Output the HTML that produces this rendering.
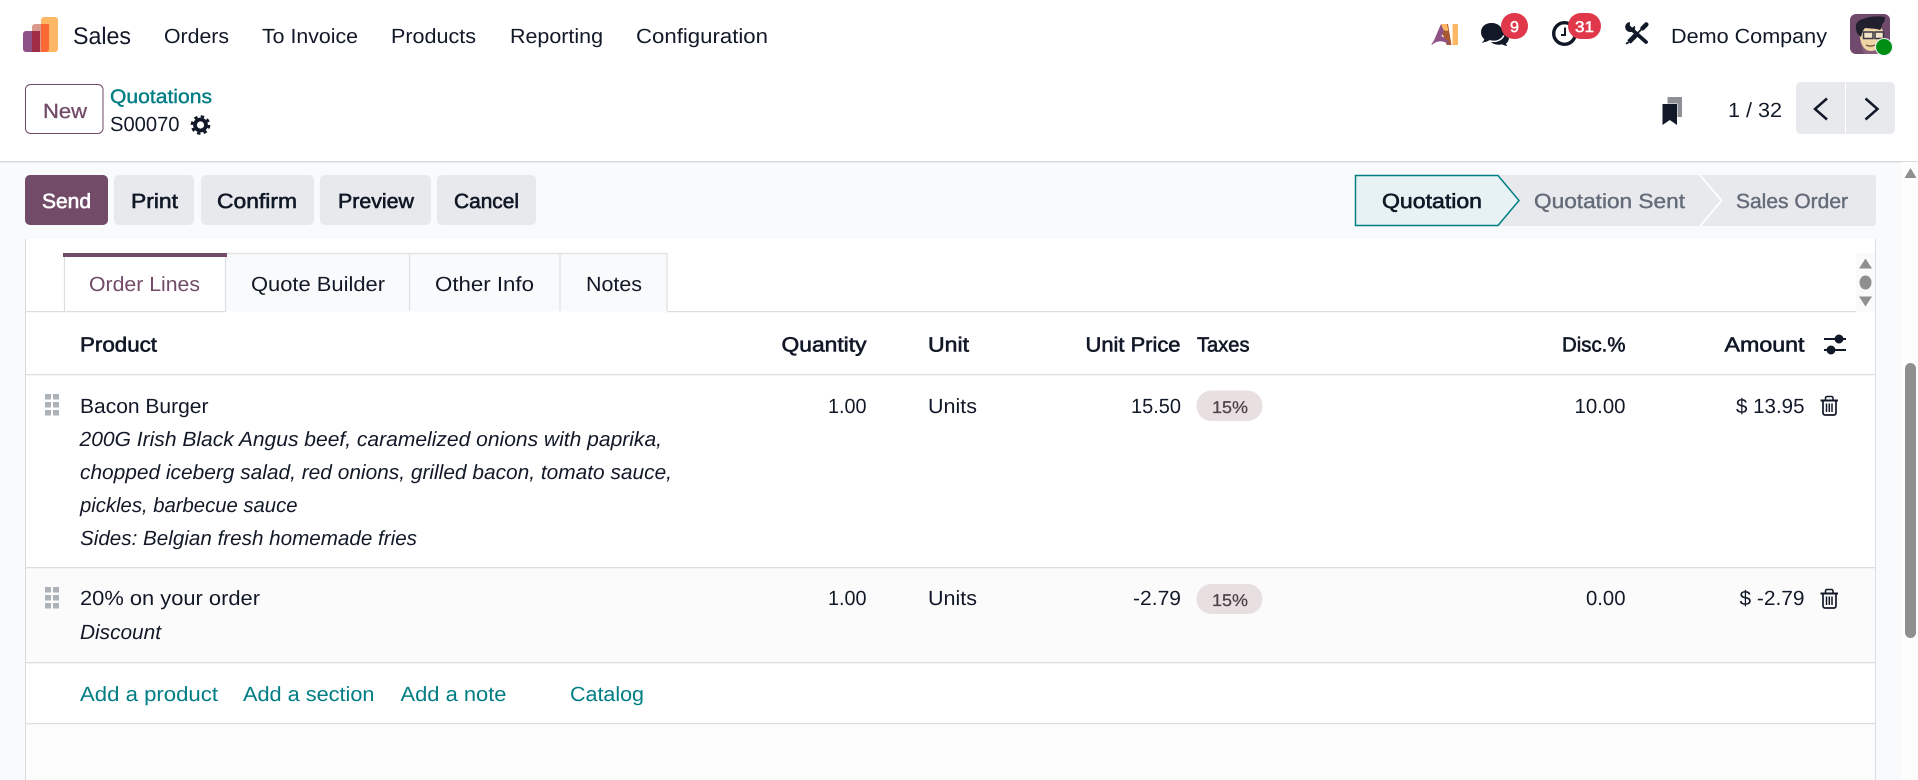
<!DOCTYPE html>
<html lang="en">
<head>
<meta charset="utf-8">
<title>Sales - S00070</title>
<style>
html,body{margin:0;padding:0;width:1918px;height:780px;overflow:hidden;background:#fff}
svg{display:block;position:absolute;left:0;top:0}
text{font-family:"Liberation Sans",sans-serif;font-size:20.5px;fill:#111827;text-rendering:geometricPrecision}
.s{stroke:#111827;stroke-width:.6}
.i{font-style:italic}
.l{fill:#017e84}
.g{fill:#646b78;stroke:#646b78;stroke-width:.4}
.m{fill:#714b67;stroke:#714b67;stroke-width:.3}
.w{fill:#fff;stroke:#fff;stroke-width:.6}
.bd{fill:#fff;font-size:15.5px;stroke:#fff;stroke-width:.5}
.t{fill:#4b4346;font-size:17px;stroke:#4b4346;stroke-width:.25}
</style>
</head>
<body>
<svg width="1918" height="780" viewBox="0 0 1918 780" xmlns="http://www.w3.org/2000/svg">
<defs>
<clipPath id="av"><rect x="1850" y="14" width="40" height="40" rx="6"/></clipPath>
<g id="trash" fill="none" stroke="#111827">
<path d="M1823 401.500V413a2 2 0 0 0 2 2h9a2 2 0 0 0 2-2V401.500" stroke-width="1.700"/>
<path d="M1820.500 400.500h17.500" stroke-width="2"/>
<path d="M1825.500 400V398a1.500 1.500 0 0 1 1.500-1.500h4.500a1.500 1.500 0 0 1 1.500 1.500v2" stroke-width="1.500"/>
<path d="M1826.500 403.500v8.500M1829.300 403.500v8.500M1832 403.500v8.500" stroke-width="1.500"/>
</g>
<g id="drag" fill="#adb1b8">
<rect x="45" y="394" width="6" height="5.500"/><rect x="53" y="394" width="6" height="5.500"/>
<rect x="45" y="402" width="6" height="5.500"/><rect x="53" y="402" width="6" height="5.500"/>
<rect x="45" y="410" width="6" height="5.500"/><rect x="53" y="410" width="6" height="5.500"/>
</g>
</defs>

<!-- backgrounds -->
<rect x="0" y="0" width="1918" height="780" fill="#f9fafb"/>
<rect x="0" y="0" width="1918" height="161" fill="#fff"/>
<rect x="0" y="161" width="1918" height="1.500" fill="#d8dadd"/>
<rect x="1901" y="162" width="17" height="618" fill="#fdfdfd"/>
<rect x="1905" y="363" width="11" height="275" rx="5.500" fill="#8f8f8f"/>
<path d="M1910.500 168l6 10h-12z" fill="#8f8f8f"/>

<!-- sheet -->
<rect x="25" y="239" width="1850.500" height="541" fill="#fff"/>
<rect x="25" y="239" width="1" height="541" fill="#d8dadd"/>
<rect x="1875" y="239" width="1" height="541" fill="#dcdfe2"/>
<rect x="26" y="568" width="1849" height="94" fill="#fbfbfb"/>
<rect x="26" y="724" width="1849" height="56" fill="#fcfcfc"/>

<!-- navbar -->
<g>
<path d="M41 20a3 3 0 0 1 3-3h11a3 3 0 0 1 3 3v29a3 3 0 0 1-3 3H41z" fill="#fdb765"/>
<path d="M32 27a3 3 0 0 1 3-3h6v28H32z" fill="#d9988c"/>
<path d="M41 24h8v25a3 3 0 0 1-3 3h-5z" fill="#fb6a36"/>
<path d="M23 34a3 3 0 0 1 3-3h6v21h-6a3 3 0 0 1-3-3z" fill="#8f5286"/>
<rect x="32" y="31" width="8" height="21" fill="#9e2d45"/>
</g>
<text x="73" y="44" style="font-size:24px" textLength="58" lengthAdjust="spacingAndGlyphs">Sales</text>
<text x="164" y="43" textLength="65" lengthAdjust="spacingAndGlyphs">Orders</text>
<text x="262" y="43" textLength="96" lengthAdjust="spacingAndGlyphs">To Invoice</text>
<text x="391" y="43" textLength="85" lengthAdjust="spacingAndGlyphs">Products</text>
<text x="510" y="43" textLength="93" lengthAdjust="spacingAndGlyphs">Reporting</text>
<text x="636" y="43" textLength="132" lengthAdjust="spacingAndGlyphs">Configuration</text>

<!-- AI icon -->
<g>
<path d="M1441 24h7l3.500 21h-4.800l-3-8.500-2-3z" fill="#a9592f"/>
<path d="M1441 24h6l1.300 7-6.300-1z" fill="#fdb765"/>
<path d="M1441 24l3 7-4 8 5 0-4.500-2.500-8.500 8.500z" fill="#8f5286"/>
<path d="M1431 45c3-5 6-8.500 9.500-9 3.500 .5 7 4 10 9-3.500-2-7-3.800-10-3.800-3 0-6.500 1.800-9.500 3.800z" fill="#8f5286"/>
<rect x="1452.500" y="24" width="5.500" height="21" fill="#fdb765"/>
</g>

<!-- chat icon -->
<g fill="#111827">
<path d="M1499 28c5 0 10 4 10 9.500 0 2.500-1 4.500-3 6.200.2 .9 1 2 2 2.300-2 0-4.500-.5-6-1.700-1 .3-2.500 .5-3.500 .5-4 0-8-2-9-5z"/>
<path d="M1491.500 23c6.500 0 11 4 11 9.300s-4.500 9.300-11 9.300c-1.300 0-2.600-.2-3.800-.5-1.500 1.200-3.700 1.900-6 1.900 1.300-1 2.300-2.400 2.600-3.900-2.200-1.700-3.300-4-3.300-6.800 0-5.300 4-9.300 10.500-9.300z"/>
<path d="M1483.500 42.800c2.300 0 4.500-.7 6-1.900 1.200 .3 2.500 .5 3.800 .5 5 0 9-2.500 10.500-6" fill="none" stroke="#fff" stroke-width="1.500"/>
</g>
<rect x="1501" y="13" width="27" height="26" rx="13" fill="#e0384a"/>
<text class="bd" x="1510" y="32" textLength="9" lengthAdjust="spacingAndGlyphs">9</text>

<!-- clock icon -->
<circle cx="1564.500" cy="33.500" r="10.800" fill="none" stroke="#111827" stroke-width="3.400"/>
<path d="M1565 27.500v7.500h-4" fill="none" stroke="#111827" stroke-width="2"/>
<rect x="1568" y="13" width="33" height="26" rx="13" fill="#e0384a"/>
<text class="bd" x="1575" y="32" textLength="19" lengthAdjust="spacingAndGlyphs">31</text>

<!-- tools icon -->
<g fill="none" stroke="#111827">
<path d="M1632.500 30l13.500 12" stroke-width="3.800" stroke-linecap="round"/>
<path d="M1629.500 22.500c-2.800 .5-4.500 3-3.700 5.800.7 2.600 3.500 4 6 3.100 2.100-.8 3.300-2.700 2.900-4.900l-2.600 1.700-2.600-2.500z" fill="#111827" stroke-width=".8"/>
<path d="M1646.300 24.500l-3.800 3.800" stroke-width="4.500" stroke-linecap="round"/>
<path d="M1642.500 28.300l-6 6" stroke-width="1.800"/>
<path d="M1637 34l-8 8" stroke-width="4.800"/>
<path d="M1629 42l-3 1.800" stroke-width="1.800"/>
</g>

<text x="1671" y="43" textLength="156" lengthAdjust="spacingAndGlyphs">Demo Company</text>

<!-- avatar -->
<g clip-path="url(#av)">
<rect x="1850" y="14" width="40" height="40" fill="#6f4a6c"/>
<path d="M1860 42l4 12h20l2-8z" fill="#8a5d7a"/>
<path d="M1859 30c0-4 4-7 11-7 7 0 11 3 13 8l-2 12c-2 5-5 8-10 8-7 0-11-6-12-21z" fill="#eed5a6"/>
<path d="M1856 28c-1-4 2-8 7-9 7-3 15-3 22-2 0 3-1 6-3 7 0 3-1 5-2 6-5-2-10-1-15-2-2 2-3 5-4 9-3-2-5-5-5-9z" fill="#22202e"/>
<rect x="1863.500" y="32" width="9.500" height="6.500" fill="#f1e3c6" stroke="#3a3845" stroke-width="1.500"/>
<rect x="1875" y="32" width="8.500" height="6.500" fill="#f1e3c6" stroke="#3a3845" stroke-width="1.500"/>
<path d="M1866 45c3 1.500 6 1.500 9 0" fill="none" stroke="#7a5a44" stroke-width="1.500"/>
</g>
<circle cx="1884" cy="47" r="8.500" fill="#008f14" stroke="#eaf4f8" stroke-width="1"/>

<!-- breadcrumb row -->
<rect x="25.500" y="84.500" width="77.500" height="49" rx="5" fill="#fff" stroke="#714b67" stroke-width="1"/>
<text class="m" x="43" y="118" textLength="44" lengthAdjust="spacingAndGlyphs">New</text>
<text x="110" y="103" style="font-size:19.500px;fill:#017e84;stroke:#017e84;stroke-width:.4" textLength="102" lengthAdjust="spacingAndGlyphs">Quotations</text>
<text x="110" y="131" textLength="69.500" lengthAdjust="spacingAndGlyphs">S00070</text>
<g>
<circle cx="200.500" cy="125" r="8.500" fill="none" stroke="#111827" stroke-width="2.600" stroke-dasharray="3.400 3.270"/>
<circle cx="200.500" cy="125" r="5.500" fill="none" stroke="#111827" stroke-width="3.800"/>
</g>

<!-- bookmark -->
<rect x="1667.500" y="97" width="14.500" height="20" fill="#8d9097"/>
<rect x="1662" y="103.500" width="15.500" height="15" fill="#fff"/>
<path d="M1662.500 104h14.500v21l-7.200-5-7.300 5z" fill="#111827"/>

<!-- pager -->
<text x="1728" y="117" textLength="54" lengthAdjust="spacingAndGlyphs">1 / 32</text>
<path d="M1801 82h44v52h-44a5 5 0 0 1-5-5V87a5 5 0 0 1 5-5z" fill="#e7e9ed"/>
<path d="M1846 82h44a5 5 0 0 1 5 5v42a5 5 0 0 1-5 5h-44z" fill="#e7e9ed"/>
<path d="M1827 98.500l-12 10.500 12 10.500" fill="none" stroke="#111827" stroke-width="2.500"/>
<path d="M1865.500 98.500l12 10.500-12 10.500" fill="none" stroke="#111827" stroke-width="2.500"/>

<!-- action buttons -->
<rect x="25" y="175" width="83" height="50" rx="5" fill="#714b67"/>
<text class="w" x="42" y="208" textLength="49" lengthAdjust="spacingAndGlyphs">Send</text>
<rect x="114" y="175" width="80" height="50" rx="5" fill="#e7e9ed"/>
<text class="s" x="131" y="208" textLength="47" lengthAdjust="spacingAndGlyphs">Print</text>
<rect x="201" y="175" width="113" height="50" rx="5" fill="#e7e9ed"/>
<text class="s" x="217" y="208" textLength="80" lengthAdjust="spacingAndGlyphs">Confirm</text>
<rect x="320" y="175" width="111" height="50" rx="5" fill="#e7e9ed"/>
<text class="s" x="338" y="208" textLength="76" lengthAdjust="spacingAndGlyphs">Preview</text>
<rect x="437" y="175" width="99" height="50" rx="5" fill="#e7e9ed"/>
<text class="s" x="454" y="208" textLength="65" lengthAdjust="spacingAndGlyphs">Cancel</text>

<!-- statusbar -->
<path d="M1495 175h378a3 3 0 0 1 3 3v45a3 3 0 0 1-3 3h-378z" fill="#e7e9ed"/>
<path d="M1700 175l21.500 25.500L1700 226" fill="none" stroke="#fff" stroke-width="1.800"/>
<path d="M1355.500 175.500h142.500l21 25-21 25h-142.500z" fill="#e6f2f3" stroke="#017e84" stroke-width="1.500"/>
<text class="s" x="1382" y="208" textLength="100" lengthAdjust="spacingAndGlyphs">Quotation</text>
<text class="g" x="1534" y="208" textLength="151" lengthAdjust="spacingAndGlyphs">Quotation Sent</text>
<text class="g" x="1736" y="208" textLength="112" lengthAdjust="spacingAndGlyphs">Sales Order</text>

<!-- tabs -->
<rect x="226" y="253" width="441" height="58.500" fill="#f9fafb"/>
<path d="M226 253.500H667M409.500 253v58M560 253v58M667 253v58" fill="none" stroke="#dee0e3" stroke-width="1.200"/>
<rect x="64" y="255" width="162" height="57" fill="#fff"/>
<path d="M64.500 255v57M225.500 255v57" fill="none" stroke="#dcdee2" stroke-width="1.200"/>
<rect x="63" y="253" width="164" height="4" fill="#714b67"/>
<rect x="26" y="311" width="199" height="1.200" fill="#dcdee2"/>
<rect x="667" y="311" width="1189" height="1.200" fill="#dcdee2"/>
<text class="m" x="89" y="291" style="stroke-width:0" textLength="111" lengthAdjust="spacingAndGlyphs">Order Lines</text>
<text x="251" y="291" textLength="134" lengthAdjust="spacingAndGlyphs">Quote Builder</text>
<text x="435" y="291" textLength="99" lengthAdjust="spacingAndGlyphs">Other Info</text>
<text x="586" y="291" textLength="56" lengthAdjust="spacingAndGlyphs">Notes</text>

<!-- tab scroller -->
<rect x="1856" y="253" width="19" height="59" fill="#fafafa"/>
<path d="M1865.500 258.500l6.500 10h-13z" fill="#8f8f8f"/>
<ellipse cx="1865.500" cy="282.500" rx="6" ry="7" fill="#8f8f8f"/>
<path d="M1859 296.500h13l-6.500 10z" fill="#8f8f8f"/>

<!-- table header -->
<text class="s" x="80" y="351.500" textLength="77" lengthAdjust="spacingAndGlyphs">Product</text>
<text class="s" x="781.500" y="351.500" textLength="85" lengthAdjust="spacingAndGlyphs">Quantity</text>
<text class="s" x="928" y="351.500" textLength="41" lengthAdjust="spacingAndGlyphs">Unit</text>
<text class="s" x="1085.500" y="351.500" textLength="95" lengthAdjust="spacingAndGlyphs">Unit Price</text>
<text class="s" x="1197" y="351.500" textLength="52.500" lengthAdjust="spacingAndGlyphs">Taxes</text>
<text class="s" x="1562" y="351.500" textLength="63.500" lengthAdjust="spacingAndGlyphs">Disc.%</text>
<text class="s" x="1724.500" y="351.500" textLength="80" lengthAdjust="spacingAndGlyphs">Amount</text>
<g stroke="#111827" stroke-width="2" fill="#111827">
<path d="M1824 339h22M1824 350h22"/>
<circle cx="1839" cy="339" r="3.500"/>
<circle cx="1831" cy="350" r="3.500"/>
</g>
<rect x="26" y="374" width="1849" height="1.300" fill="#dcdee2"/>

<!-- row 1 -->
<use href="#drag"/>
<text x="80" y="413" textLength="128.500" lengthAdjust="spacingAndGlyphs">Bacon Burger</text>
<text class="i" x="79.500" y="446" textLength="582.500" lengthAdjust="spacingAndGlyphs">200G Irish Black Angus beef, caramelized onions with paprika,</text>
<text class="i" x="80" y="479" textLength="592" lengthAdjust="spacingAndGlyphs">chopped iceberg salad, red onions, grilled bacon, tomato sauce,</text>
<text class="i" x="80" y="512" textLength="217.500" lengthAdjust="spacingAndGlyphs">pickles, barbecue sauce</text>
<text class="i" x="80" y="545" textLength="337" lengthAdjust="spacingAndGlyphs">Sides: Belgian fresh homemade fries</text>
<text x="828" y="413" textLength="38.500" lengthAdjust="spacingAndGlyphs">1.00</text>
<text x="928" y="413" textLength="49" lengthAdjust="spacingAndGlyphs">Units</text>
<text x="1131" y="413" textLength="50" lengthAdjust="spacingAndGlyphs">15.50</text>
<rect x="1196.500" y="390.500" width="66" height="30.500" rx="15" fill="#e7dfe0"/>
<text class="t" x="1212" y="413" textLength="36" lengthAdjust="spacingAndGlyphs">15%</text>
<text x="1574.500" y="413" textLength="51" lengthAdjust="spacingAndGlyphs">10.00</text>
<text x="1736" y="413" textLength="68.500" lengthAdjust="spacingAndGlyphs">$ 13.95</text>
<use href="#trash"/>
<rect x="26" y="567" width="1849" height="1.300" fill="#dcdee2"/>

<!-- row 2 -->
<use href="#drag" y="193"/>
<text x="80" y="605" textLength="180" lengthAdjust="spacingAndGlyphs">20% on your order</text>
<text class="i" x="80" y="639" textLength="81" lengthAdjust="spacingAndGlyphs">Discount</text>
<text x="828" y="605" textLength="38.500" lengthAdjust="spacingAndGlyphs">1.00</text>
<text x="928" y="605" textLength="49" lengthAdjust="spacingAndGlyphs">Units</text>
<text x="1133" y="605" textLength="48" lengthAdjust="spacingAndGlyphs">-2.79</text>
<rect x="1196.500" y="584" width="66" height="30" rx="15" fill="#e7dfe0"/>
<text class="t" x="1212" y="606" textLength="36" lengthAdjust="spacingAndGlyphs">15%</text>
<text x="1586" y="605" textLength="39.500" lengthAdjust="spacingAndGlyphs">0.00</text>
<text x="1739.500" y="605" textLength="65" lengthAdjust="spacingAndGlyphs">$ -2.79</text>
<use href="#trash" y="193"/>
<rect x="26" y="662" width="1849" height="1.300" fill="#dcdee2"/>

<!-- add row -->
<text class="l" x="80" y="701" textLength="138" lengthAdjust="spacingAndGlyphs">Add a product</text>
<text class="l" x="243" y="701" textLength="131.500" lengthAdjust="spacingAndGlyphs">Add a section</text>
<text class="l" x="400.500" y="701" textLength="106" lengthAdjust="spacingAndGlyphs">Add a note</text>
<text class="l" x="570" y="701" textLength="74" lengthAdjust="spacingAndGlyphs">Catalog</text>
<rect x="26" y="723" width="1849" height="1.300" fill="#dcdee2"/>
</svg>
</body>
</html>
